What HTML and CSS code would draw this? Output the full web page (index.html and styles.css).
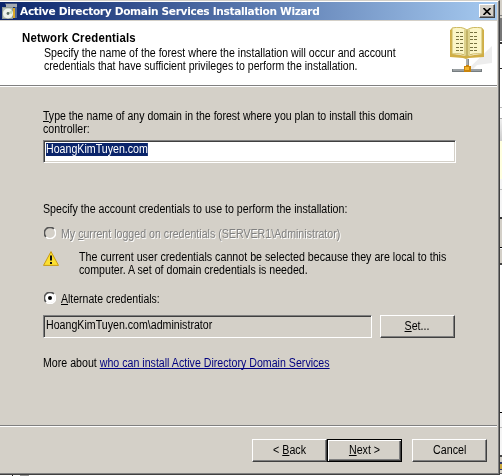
FILE: index.html
```html
<!DOCTYPE html>
<html lang="en">
<head>
<meta charset="utf-8">
<title>Active Directory Domain Services Installation Wizard</title>
<link rel="stylesheet" href="styles.css">
</head>
<body>
<div class="desktop">
<main class="window">
  <header class="titlebar">
    <svg class="app-icon" width="16" height="17" viewBox="0 0 16 17">
      <path d="M4 1h11v3H4z" fill="#d8dce0"/><path d="M3 1h12M4 3h11" stroke="#707884"/>
      <path d="M10 5h3v10h-3z" fill="#d9a928"/><path d="M13 4h2v11h-2z" fill="#4f6795"/>
      <path d="M0 4h11v12H0z" fill="#8f9a94"/><path d="M1 5h9v10H1z" fill="#b6c0b7"/>
      <circle cx="6" cy="10.5" r="5" fill="#edf2eb"/><path d="M6 10l4-3v4z" fill="#bdd9b7"/>
      <circle cx="6" cy="10.5" r="1.4" fill="#596b62"/>
    </svg>
    <h1 class="title">Active Directory Domain Services Installation Wizard</h1>
    <button class="close" aria-label="Close"><svg width="8" height="7" viewBox="0 0 8 7"><path d="M.5 0L7.5 7M7.5 0L.5 7" stroke="#000" stroke-width="1.6"/></svg></button>
  </header>
  <section class="banner">
    <div class="banner-text">
      <h2 class="heading">Network Credentials</h2>
      <p class="sub"><span class="line l1">Specify the name of the forest where the installation will occur and account</span><span class="line l2">credentials that have sufficient privileges to perform the installation.</span></p>
    </div>
    <svg class="book" width="44" height="48" viewBox="0 0 44 48">
      <path d="M18 42L42 19v17l-15 2-6 6z" fill="#ededed"/>
      <path d="M0 3l3-2v26l14 2 15-2V1l2 2v27l-15 1-3 1-3-1-13-1z" fill="#d1ae45"/>
      <path d="M2 1q10-2 15 2 5-4 15-2v26q-10-1-15 2-5-3-15-2z" fill="#fbf5c7" stroke="#cbb75d"/>
      <path d="M14 2l3 2 3-2v25l-3 2-3-2z" fill="#ddd28c"/><path d="M17 3v26" stroke="#a89543"/>
      <path d="M6 5.5h8m-8 4h8m-8 3h8m-8 4h8m-8 4h8m-8 3h8M20 5.5h8m-8 4h8m-8 3h8m-8 4h8m-8 4h8m-8 3h8" stroke="#77723f" stroke-dasharray="3 1"/>
      <path d="M16 32h3v7h-3z" fill="#858b8d"/><path d="M17 32v7" stroke="#ccd0d1"/>
      <path d="M2 42h30v3H2z" fill="#767d80"/><path d="M3 43h28" stroke="#bfc4c6"/>
      <path d="M14 39h2v-1h3v1h2v6h-7z" fill="#c9840b"/><path d="M15 40h4v3h-4z" fill="#f4b52b"/>
    </svg>
  </section>
  <section class="content">
    <p class="prompt"><span class="line l3"><u>T</u>ype the name of any domain in the forest where you plan to install this domain</span><span class="line l4">controller:</span></p>
    <div class="field domain"><span class="line selected">HoangKimTuyen.com</span></div>
    <p class="line l5">Specify the account credentials to use to perform the installation:</p>
    <div class="option disabled">
      <svg class="radio" width="12" height="12" viewBox="0 0 12 12"><circle cx="6" cy="6" r="5" fill="#d4d0c8"/><path d="M2 10A5.5 5.5 0 0 1 10 2" fill="none" stroke="#555" stroke-width="1.6"/><path d="M10 2A5.5 5.5 0 0 1 2 10" fill="none" stroke="#fff" stroke-width="1.5"/></svg>
      <span class="line l6">My <u>c</u>urrent logged on credentials (SERVER1\Administrator)</span>
    </div>
    <div class="warning">
      <svg width="16" height="15" viewBox="0 0 16 15"><path d="M8 .6L15.5 14.4H.5z" fill="#fce031" stroke="#c99b15" stroke-linejoin="round"/><path d="M8 4.5v5M8 11v2" stroke="#111" stroke-width="2"/></svg>
      <p class="warning-text"><span class="line l7">The current user credentials cannot be selected because they are local to this</span><span class="line l8">computer. A set of domain credentials is needed.</span></p>
    </div>
    <div class="option alternate">
      <svg class="radio" width="12" height="12" viewBox="0 0 12 12"><circle cx="6" cy="6" r="5" fill="#fff"/><path d="M2 10A5.5 5.5 0 0 1 10 2" fill="none" stroke="#555" stroke-width="1.6"/><path d="M10 2A5.5 5.5 0 0 1 2 10" fill="none" stroke="#fff" stroke-width="1.5"/><circle cx="6" cy="6" r="2" fill="#000"/></svg>
      <span class="line l9"><u>A</u>lternate credentials:</span>
    </div>
    <div class="account-row"><div class="field account"><span class="line l10">HoangKimTuyen.com\administrator</span></div><button class="button set"><span><u>S</u>et...</span></button></div>
    <p class="line more">More about <a class="link">who can install Active Directory Domain Services</a></p>
  </section>
  <footer class="footer">
    <button class="button back"><span>&lt; <u>B</u>ack</span></button>
    <button class="button next"><span><u>N</u>ext &gt;</span></button>
    <button class="button cancel"><span>Cancel</span></button>
  </footer>
</main>
<div class="backdrop"></div>
</div>
</body>
</html>
```

FILE: styles.css
```css
* { box-sizing: border-box; }
body { margin: 0; width: 502px; height: 476px; overflow: hidden; background: #fff; color: #000; font: 12px/13px "Liberation Sans", Arial, sans-serif; }
h1, h2, p { margin: 0; }
button { padding: 0; font: inherit; color: #000; }
svg { display: block; flex: none; }
u { text-underline-offset: 1px; text-decoration-thickness: 1px; text-decoration-skip-ink: none; }
.desktop { display: flex; height: 476px; background: linear-gradient(90deg, #fff 12px, #222 12px, #222 13px, #fff 13px, #fff 20px, #999 20px, #999 29px, #fff 29px) bottom / 100% 1px no-repeat; }
.window { display: flex; flex-direction: column; flex: none; width: 500px; height: 475px; background: #d4d0c8; border-top: 1px solid #d4d0c8; border-right: 1px solid #404040; border-bottom: 1px solid #404040; box-shadow: inset -1px -1px #808080, inset 0 1px #fff; }
.titlebar { display: flex; align-items: center; flex: none; height: 18px; margin: 1px 2px 0 0; padding-left: 2px; background: linear-gradient(90deg, #0a246a, #a6caf0); }
.title { flex: 1; margin-left: 2px; padding-top: 1px; color: #fff; font: bold 11px/17px "DejaVu Sans", Verdana, sans-serif; white-space: nowrap; letter-spacing: -.35px; transform: scaleX(.965); transform-origin: left; }
.close { display: flex; align-items: center; justify-content: center; width: 16px; height: 14px; margin-right: 2px; background: #d4d0c8; border: 1px solid; border-color: #fff #404040 #404040 #fff; box-shadow: inset -1px -1px #808080; }
.banner { display: flex; flex: none; height: 66px; margin: 1px 2px 0 0; padding: 10px 0 0 22px; background: #fff; border-bottom: 1px solid #fff; box-shadow: inset 0 -1px #808080; }
.banner-text { width: 428px; padding-top: 1px; }
.heading { width: max-content; font-size: 12px; line-height: 13px; letter-spacing: .2px; white-space: nowrap; transform: scaleX(.95); transform-origin: left; }
.sub { margin: 2px 0 0 22px; }
.line { display: block; width: max-content; white-space: nowrap; transform: scaleX(.886); transform-origin: left; }
.line.l2, .line.l3 { transform: scaleX(.879); }
.line.l7 { transform: scaleX(.891); }
.line.l9 { transform: scaleX(.876); }
.book { margin-top: -4px; }
.content { flex: none; height: 338px; padding: 23px 43px 0 43px; }
.field { display: flex; align-items: flex-start; border: 1px solid; border-color: #808080 #fff #fff #808080; box-shadow: inset 1px 1px #404040, inset -1px -1px #d4d0c8; }
.domain { width: 413px; height: 23px; margin-top: 4px; padding: 2px; background: #fff; }
.selected { height: 13px; color: #fff; background: #0a246a; }
.l5 { margin-top: 40px; }
.option { display: flex; align-items: center; gap: 5px; height: 14px; margin-left: 1px; }
.radio { margin-bottom: 2px; }
.disabled { margin-top: 11px; color: #808080; text-shadow: 1px 1px #fff; }
.warning { display: flex; gap: 20px; margin-top: 10px; }
.alternate { margin-top: 15px; }
.account-row { display: flex; gap: 8px; margin-top: 9px; }
.account { width: 329px; height: 23px; padding: 3px 2px; }
.button { display: flex; align-items: center; justify-content: center; width: 75px; height: 23px; background: #d4d0c8; border: 1px solid; border-color: #fff #404040 #404040 #fff; box-shadow: inset -1px -1px #808080; white-space: nowrap; }
.button span { transform: scaleX(.89); }
.more { margin-top: 19px; }
.link { color: #00007f; text-decoration: underline; text-underline-offset: 1px; text-decoration-skip-ink: none; }
.footer { display: flex; flex: none; height: 48px; margin-right: 2px; padding: 13px 0 0 252px; border-top: 1px solid #808080; box-shadow: inset 0 1px #fff; }
.next { border-color: #000; box-shadow: inset 1px 1px #fff, inset -1px -1px #404040, inset -2px -2px #808080; }
.cancel { margin-left: 10px; }
.backdrop {
  width: 2px; height: 476px;
  background: linear-gradient(#d4d0c8 15px, #808080 15px, #808080 16px, #d4d0c8 16px, #d4d0c8 18px, #777 18px, #777 41px, #fff 41px, #fff 42px, #333 42px, #333 44px, #fff 44px, #fff 68px, #222 68px, #222 69px, #fff 69px, #fff 107px, #bbb 107px, #bbb 108px, #fff 108px, #fff 118px, #aaa 118px, #aaa 119px, #f0f0f0 119px, #ccc 141px, #ffffdf 141px, #ffffdf 179px, #f5f5f5 179px, #f5f5f5 189px, #bbb 189px, #bbb 190px, #f5f5f5 190px, #f5f5f5 217px, #333 217px, #333 219px, #d4d0c8 219px, #d4d0c8 247px, #000 247px, #000 248px, #fff 248px, #fff 249px, #d4d0c8 249px, #d4d0c8 263px, #444 263px, #444 265px, #fff 265px, #fff 412px, #000 412px, #000 413px, #f5f5f5 413px, #f5f5f5 427px, #bbb 427px, #bbb 428px, #f5f5f5 428px, #f5f5f5 455px, #444 455px, #444 457px, #d4d0c8 457px, #d4d0c8 462px, #333a66 462px, #333a66 464px, #cba83f 464px, #cba83f 469px, #333a66 469px, #333a66 470px, #d4d0c8 470px, #d4d0c8 473px, #555 473px, #555 474px, #fff 474px);
}
```
